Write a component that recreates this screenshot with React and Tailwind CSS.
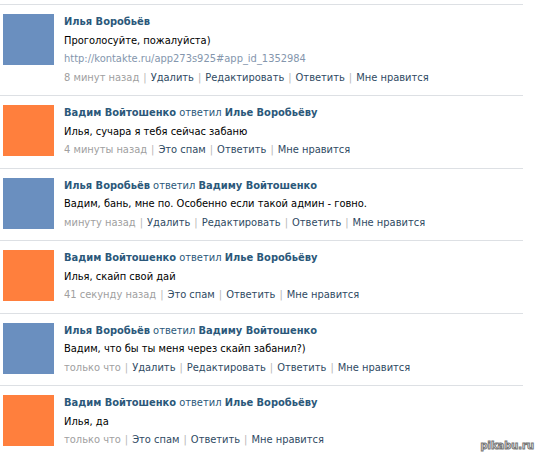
const items = [
  {
    color: "bg-[#6a8fbf]",
    author: "Илья Воробьёв",
    to: null,
    text: "Проголосуйте, пожалуйста)",
    link: "http://kontakte.ru/app273s925#app_id_1352984",
    time: "8 минут назад",
    own: true,
  },
  {
    color: "bg-[#ff7f3d]",
    author: "Вадим Войтошенко",
    to: "Илье Воробьёву",
    text: "Илья, сучара я тебя сейчас забаню",
    time: "4 минуты назад",
    own: false,
  },
  {
    color: "bg-[#6a8fbf]",
    author: "Илья Воробьёв",
    to: "Вадиму Войтошенко",
    text: "Вадим, бань, мне по. Особенно если такой админ - говно.",
    time: "минуту назад",
    own: true,
  },
  {
    color: "bg-[#ff7f3d]",
    author: "Вадим Войтошенко",
    to: "Илье Воробьёву",
    text: "Илья, скайп свой дай",
    time: "41 секунду назад",
    own: false,
  },
  {
    color: "bg-[#6a8fbf]",
    author: "Илья Воробьёв",
    to: "Вадиму Войтошенко",
    text: "Вадим, что бы ты меня через скайп забанил?)",
    time: "только что",
    own: true,
  },
  {
    color: "bg-[#ff7f3d]",
    author: "Вадим Войтошенко",
    to: "Илье Воробьёву",
    text: "Илья, да",
    time: "только что",
    own: false,
  },
];

function Sep() {
  return <span className="text-[#b8b8b8] mx-[4px]">|</span>;
}

function Comment({ item }) {
  const actions = item.own
    ? ["Удалить", "Редактировать", "Ответить", "Мне нравится"]
    : ["Это спам", "Ответить", "Мне нравится"];
  return (
    <div className="flex border-t border-[#dde0e4] pt-[8px] pb-[8px]">
      <div className={`w-[51px] h-[51px] mt-[1px] ml-[3px] shrink-0 ${item.color}`} />
      <div className="ml-[10px] leading-[18.5px]">
        <div className="text-[#2b587a]">
          <span className="font-bold">{item.author}</span>
          {item.to && (
            <>
              <span> ответил </span>
              <span className="font-bold">{item.to}</span>
            </>
          )}
        </div>
        <div className="text-black">{item.text}</div>
        {item.link && <div className="text-[#8496ad]">{item.link}</div>}
        <div>
          <span className="text-[#a0a0a0]">{item.time}</span>
          {actions.map((a) => (
            <span key={a}>
              <Sep />
              <span className="text-[#2f4a63]">{a}</span>
            </span>
          ))}
        </div>
      </div>
    </div>
  );
}

export default function App() {
  return (
    <div className="w-[542px] h-[462px] bg-white relative overflow-hidden font-['DejaVu_Sans_Condensed','DejaVu_Sans',sans-serif] text-[11px] [font-stretch:condensed]">
      <div className="pt-[4px] w-[523px]">
        {items.map((item, i) => (
          <Comment key={i} item={item} />
        ))}
      </div>
      <div className="absolute right-[8px] bottom-[8px] text-[11px] text-white font-bold [-webkit-text-stroke:1px_#777] font-['DejaVu_Sans',sans-serif]">
        pikabu.ru
      </div>
    </div>
  );
}
